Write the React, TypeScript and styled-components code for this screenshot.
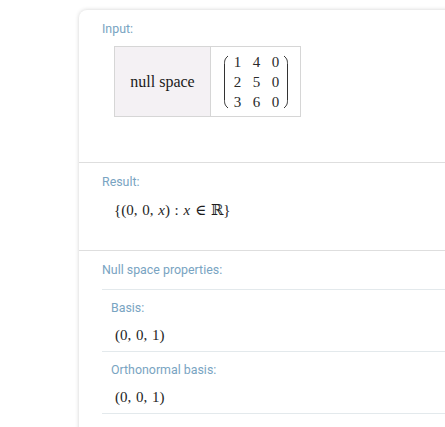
import React from 'react';
import styled, { createGlobalStyle } from 'styled-components';

const GlobalStyle = createGlobalStyle`
    html, body {
        margin: 0;
        padding: 0;
        background: #ffffff;
    }
    body {
        font-family: Roboto, "Liberation Sans", sans-serif;
        overflow: hidden;
    }
`

const Page = styled.div`
    width: 445px;
    height: 427px;
    padding: 10px 0 0 79px;
    box-sizing: border-box;
    overflow: hidden;
`

const Card = styled.div`
    width: 420px;
    min-height: 440px;
    background: #fff;
    border-radius: 8px 0 0 0;
    box-shadow: 0 0 4px rgba(0, 0, 0, 0.18);
`

const Pod = styled.section<{ height: number; last?: boolean }>`
    height: ${( p ) => p.height}px;
    padding: 12px 0 0 23px;
    box-sizing: border-box;
    border-bottom: ${( p ) => ( p.last ? 'none' : '1px solid #dedede' )};
`

const Label = styled.div<{ small?: boolean }>`
    font-size: 12.4px;
    line-height: 14px;
    color: #79a4c2;
    margin-left: ${( p ) => ( p.small ? 9 : 0 )}px;
`

const InputTable = styled.div`
    display: flex;
    margin: 10px 0 0 12px;
    width: 187px;
    height: 71px;
    border: 1px solid #d6d6d6;
    box-sizing: border-box;
`

const Cell = styled.div<{ shaded?: boolean }>`
    display: flex;
    align-items: center;
    justify-content: center;
    width: ${( p ) => ( p.shaded ? 96 : 90 )}px;
    background: ${( p ) => ( p.shaded ? '#f4f1f4' : '#fff' )};
    border-right: ${( p ) => ( p.shaded ? '1px solid #d6d6d6' : 'none' )};
    font-family: "Liberation Serif", "DejaVu Serif", serif;
    font-size: 16px;
    color: #1a1a1a;
`

const Matrix = styled.div`
    display: flex;
    align-items: center;
    gap: 3px;
    margin-left: 2px;
`

const Grid = styled.div`
    display: grid;
    grid-template-columns: repeat(3, 10px);
    column-gap: 9px;
    font-size: 15px;
    line-height: 20px;
    text-align: center;
    color: #2a2a2a;
`

const MathText = styled.div<{ m: string }>`
    font-family: "Liberation Serif", "DejaVu Serif", serif;
    font-size: 15px;
    color: #1e1e1e;
    margin: ${( p ) => p.m};
    word-spacing: 1px;
`

const Sub = styled.div`
    border-top: 1px solid #e3e9ec;
    height: 62px;
    padding-top: 11px;
    box-sizing: border-box;
`

const SubList = styled.div`
    margin-top: 12px;
`

const Italic = styled.i`
    font-style: italic;
`

function Paren( { flip }: { flip?: boolean } ) {
    return (
        <svg width="6" height="54" viewBox="0 0 6 54" style={{ transform: flip ? 'scaleX(-1)' : undefined }}>
            <path d="M5 1 C1.5 4 1.5 6 1.5 10 L1.5 44 C1.5 48 1.5 50 5 53" fill="none" stroke="#333" strokeWidth="1"/>
        </svg>
    )
}

export default function App(): JSX.Element {
    const rows = [['1', '4', '0'], ['2', '5', '0'], ['3', '6', '0']]

    return (
        <Page>
            <GlobalStyle/>
            <Card>
                <Pod height={153}>
                    <Label>Input:</Label>
                    <InputTable>
                        <Cell shaded>null space</Cell>
                        <Cell>
                            <Matrix>
                                <Paren/>
                                <Grid>
                                    {rows.flat().map( ( v, i ) => <span key={i}>{v}</span> )}
                                </Grid>
                                <Paren flip/>
                            </Matrix>
                        </Cell>
                    </InputTable>
                </Pod>
                <Pod height={88}>
                    <Label>Result:</Label>
                    <MathText m="12px 0 0 12px">
                        {'{(0, 0, '}<Italic>x</Italic>{') : '}<Italic>x</Italic>{' ∈ ℝ}'}
                    </MathText>
                </Pod>
                <Pod height={200} last>
                    <Label>Null space properties:</Label>
                    <SubList>
                        <Sub>
                            <Label small>Basis:</Label>
                            <MathText m="12px 0 0 13px">(0, 0, 1)</MathText>
                        </Sub>
                        <Sub>
                            <Label small>Orthonormal basis:</Label>
                            <MathText m="12px 0 0 13px">(0, 0, 1)</MathText>
                        </Sub>
                        <Sub/>
                    </SubList>
                </Pod>
            </Card>
        </Page>
    )
}
